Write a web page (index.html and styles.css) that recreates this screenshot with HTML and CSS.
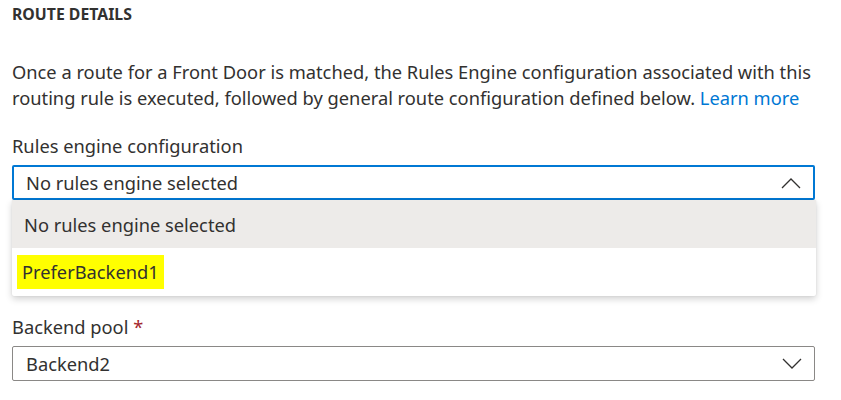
FILE: index.html
```html
<!DOCTYPE html>
<html>
<head>
<meta charset="utf-8">
<link rel="stylesheet" href="styles.css">
</head>
<body>
<div class="page">
  <h2 class="heading">ROUTE DETAILS</h2>
  <p class="desc">Once a route for a Front Door is matched, the Rules Engine configuration associated with this routing rule is executed, followed by general route configuration defined below. <a class="link" href="#">Learn more</a></p>
  <div class="field field-rules">
    <label class="label">Rules engine configuration</label>
    <div class="select-wrap">
      <div class="select select-open">
        <span class="value">No rules engine selected</span>
        <svg class="chev" width="20" height="12" viewBox="0 0 20 12"><path d="M1 11 L10 2 L19 11" fill="none" stroke="#323130" stroke-width="1.3"/></svg>
      </div>
      <div class="menu">
        <div class="option option-selected">No rules engine selected</div>
        <div class="option"><span class="hl">PreferBackend1</span></div>
      </div>
    </div>
  </div>
  <div class="field field-pool">
    <label class="label">Backend pool <span class="req">*</span></label>
    <div class="select">
      <span class="value">Backend2</span>
      <svg class="chev" width="20" height="12" viewBox="0 0 20 12"><path d="M1 1 L10 10 L19 1" fill="none" stroke="#323130" stroke-width="1.3"/></svg>
    </div>
  </div>
</div>
</body>
</html>
```
FILE: styles.css
```css
* { box-sizing: border-box; }
html, body { margin: 0; padding: 0; background: #fff; }
body {
  font-family: "Noto Sans", "Open Sans", sans-serif;
  color: #323130;
  font-size: 18.3px;
}
.page {
  width: 841px;
  height: 400px;
  padding: 0 26px 0 12px;
  overflow: hidden;
}
.heading {
  margin: 0;
  padding-top: 4px;
  font-size: 15.8px;
  font-weight: 700;
  line-height: 20px;
  color: #323130;
  letter-spacing: 0;
}
.desc {
  margin: 35px 0 0 0;
  line-height: 26px;
}
.link { color: #0078d4; text-decoration: none; }
.field-rules { margin-top: 22px; }
.label {
  display: block;
  line-height: 26px;
  margin-bottom: 6px;
}
.select-wrap { position: relative; }
.select {
  height: 35px;
  border: 1px solid #8a8886;
  border-radius: 2px;
  display: flex;
  align-items: center;
  justify-content: space-between;
  padding: 0 12px 0 13px;
  background: #fff;
}
.select-open {
  border: 2px solid #0078d4;
  height: 35px;
  padding-left: 12px;
}
.chev { display: block; }
.menu {
  position: absolute;
  left: 0;
  right: -1px;
  top: 35px;
  background: #fff;
  border-radius: 0 0 2px 2px;
  box-shadow: 0 3px 7px rgba(0,0,0,0.18), 0 0 2px rgba(0,0,0,0.08);
  z-index: 2;
}
.option {
  height: 48px;
  display: flex;
  align-items: center;
  padding-left: 12px;
}
.option-selected { background: #edebe9; }
.hl {
  background: #ffff00;
  padding: 4px 5px 5px 5px;
  margin-left: -7px;
}
.field-pool { margin-top: 114px; }
.label .req { color: #a4262c; }
```
